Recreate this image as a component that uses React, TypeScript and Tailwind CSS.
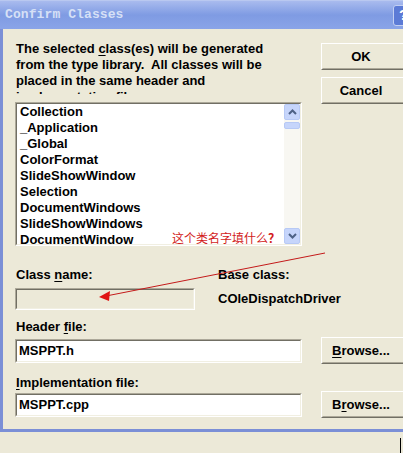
import React from "react";

const sunken =
  "border border-t-[#aca899] border-l-[#aca899] border-r-white border-b-white";
const sunkenInner =
  "border border-t-[#716f64] border-l-[#716f64] border-r-[#f1efe2] border-b-[#f1efe2]";

const Btn = ({ children }: { children: React.ReactNode }) => (
  <div className="w-[86px] h-[27px] shrink-0 border border-t-white border-l-white border-r-[#716f64] border-b-[#716f64] bg-[#ece9d8]">
    <div className="w-full h-full flex items-center justify-center border border-transparent border-r-[#aca899] border-b-[#aca899] pr-[6px] font-bold text-[13px] text-black">
      {children}
    </div>
  </div>
);

const EditBox = ({ value, disabled, w }: { value?: string; disabled?: boolean; w: string }) => (
  <div className={`${w} h-full ${sunken}`}>
    <div
      className={`w-full h-full ${sunkenInner} ${disabled ? "bg-[#ece9d8]" : "bg-white"} flex items-center pl-[2px] font-bold text-[13px]`}
    >
      {value}
    </div>
  </div>
);

const items = [
  "Collection",
  "_Application",
  "_Global",
  "ColorFormat",
  "SlideShowWindow",
  "Selection",
  "DocumentWindows",
  "SlideShowWindows",
  "DocumentWindow",
];

const Arrow = ({ up }: { up?: boolean }) => (
  <div className="w-[16px] h-[16px] rounded-[2px] border border-[#b7c9f5] bg-[#c6d5fb] flex items-center justify-center">
    <svg width="9" height="6" viewBox="0 0 9 6">
      <path
        d={up ? "M1 5 L4.5 1.5 L8 5" : "M1 1 L4.5 4.5 L8 1"}
        fill="none"
        stroke="#4d6185"
        strokeWidth="2"
      />
    </svg>
  </div>
);

export default function App() {
  return (
    <div className="relative w-[403px] h-[453px] overflow-hidden bg-[#ece9d8] text-black font-['Liberation_Sans',Arial,sans-serif]">
      {/* title bar */}
      <div className="h-[29px] flex items-center bg-gradient-to-b from-[#a9bbee] via-[#7f9be3] to-[#8aa4e8] border-t border-[#b9c8f0]">
        <span className="ml-[5px] font-['Liberation_Mono',monospace] font-bold text-[13px] text-[#d6e0f6] tracking-[0.1px]">
          Confirm Classes
        </span>
        <div className="ml-auto mr-[-12px] w-[22px] h-[21px] rounded-[3px] border border-[#c3d0f3] bg-[#5c7bd6] flex items-center pl-[5px] text-white font-bold text-[14px]">
          ?
        </div>
      </div>

      {/* body */}
      <div className="h-[403px] border-l-[3px] border-b-[3px] border-[#7b8fd6] pl-[12px] text-[13px] font-bold">
        <div className="flex">
          <div className="w-[287px] shrink-0 flex flex-col">
            <div className="mt-[12px] h-[53px] overflow-hidden pl-[1px] leading-[16px]">
              The selected <u className="underline-offset-2">c</u>lass(es) will be generated
              <br />
              from the type library.&nbsp; All classes will be
              <br />
              placed in the same header and
              <br />
              implementation file.
            </div>
            <div className={`mt-[8px] h-[144px] ${sunken}`}>
              <div className={`w-full h-full ${sunkenInner} bg-white flex`}>
                <div className="flex-1 pl-[3px] leading-[16px] overflow-hidden">
                  {items.map((it) => (
                    <div key={it}>{it}</div>
                  ))}
                </div>
                <div className="w-[16px] bg-[#f8f7f2] flex flex-col">
                  <Arrow up />
                  <div className="mt-[2px] h-[7px] rounded-[2px] border border-[#b7c9f5] bg-[#c6d5fb]" />
                  <div className="flex-1" />
                  <Arrow />
                </div>
              </div>
            </div>
          </div>
          <div className="ml-[19px] flex flex-col">
            <div className="mt-[14px]">
              <Btn>OK</Btn>
            </div>
            <div className="mt-[7px]">
              <Btn>Cancel</Btn>
            </div>
          </div>
        </div>

        <div className="mt-[21px] flex leading-[16px]">
          <div className="w-[203px] shrink-0">
            <div className="pl-[1px]">
              Class <u className="underline-offset-2">n</u>ame:
            </div>
            <div className="mt-[5px] h-[22px]">
              <EditBox w="w-[180px]" disabled />
            </div>
          </div>
          <div>
            <div>Base class:</div>
            <div className="mt-[8px]">COleDispatchDriver</div>
          </div>
        </div>

        <div className="mt-[9px] pl-[1px] leading-[16px]">
          Header <u className="underline-offset-2">f</u>ile:
        </div>
        <div className="mt-[2px] flex items-center h-[27px]">
          <div className="h-[24px] shrink-0">
            <EditBox w="w-[287px]" value="MSPPT.h" />
          </div>
          <div className="ml-[19px]">
            <Btn>
              <u className="underline-offset-2">B</u>rowse...
            </Btn>
          </div>
        </div>

        <div className="mt-[11px] pl-[1px] leading-[16px]">
          <u className="underline-offset-2">I</u>mplementation file:
        </div>
        <div className="flex items-center h-[27px]">
          <div className="h-[24px] shrink-0">
            <EditBox w="w-[287px]" value="MSPPT.cpp" />
          </div>
          <div className="ml-[19px]">
            <Btn>
              B<u className="underline-offset-2">r</u>owse...
            </Btn>
          </div>
        </div>
      </div>

      <div className="flex justify-end">
        <div className="mt-[6px] mr-[2px] w-[1px] h-[20px] bg-black" />
      </div>

      {/* annotation overlay */}
      <div className="absolute left-[172px] top-[230px] text-[12px] leading-[16px] text-[#d21c1c] font-['Noto_Sans_CJK_SC',sans-serif]">
        这个类名字填什么<span className="font-bold">？</span>
      </div>
      <svg className="absolute left-0 top-0" width="403" height="453">
        <line x1="325" y1="253" x2="106" y2="296" stroke="#c41a1a" strokeWidth="1" />
        <polygon points="99,297 110,291 109,301" fill="#e01414" />
      </svg>
    </div>
  );
}
